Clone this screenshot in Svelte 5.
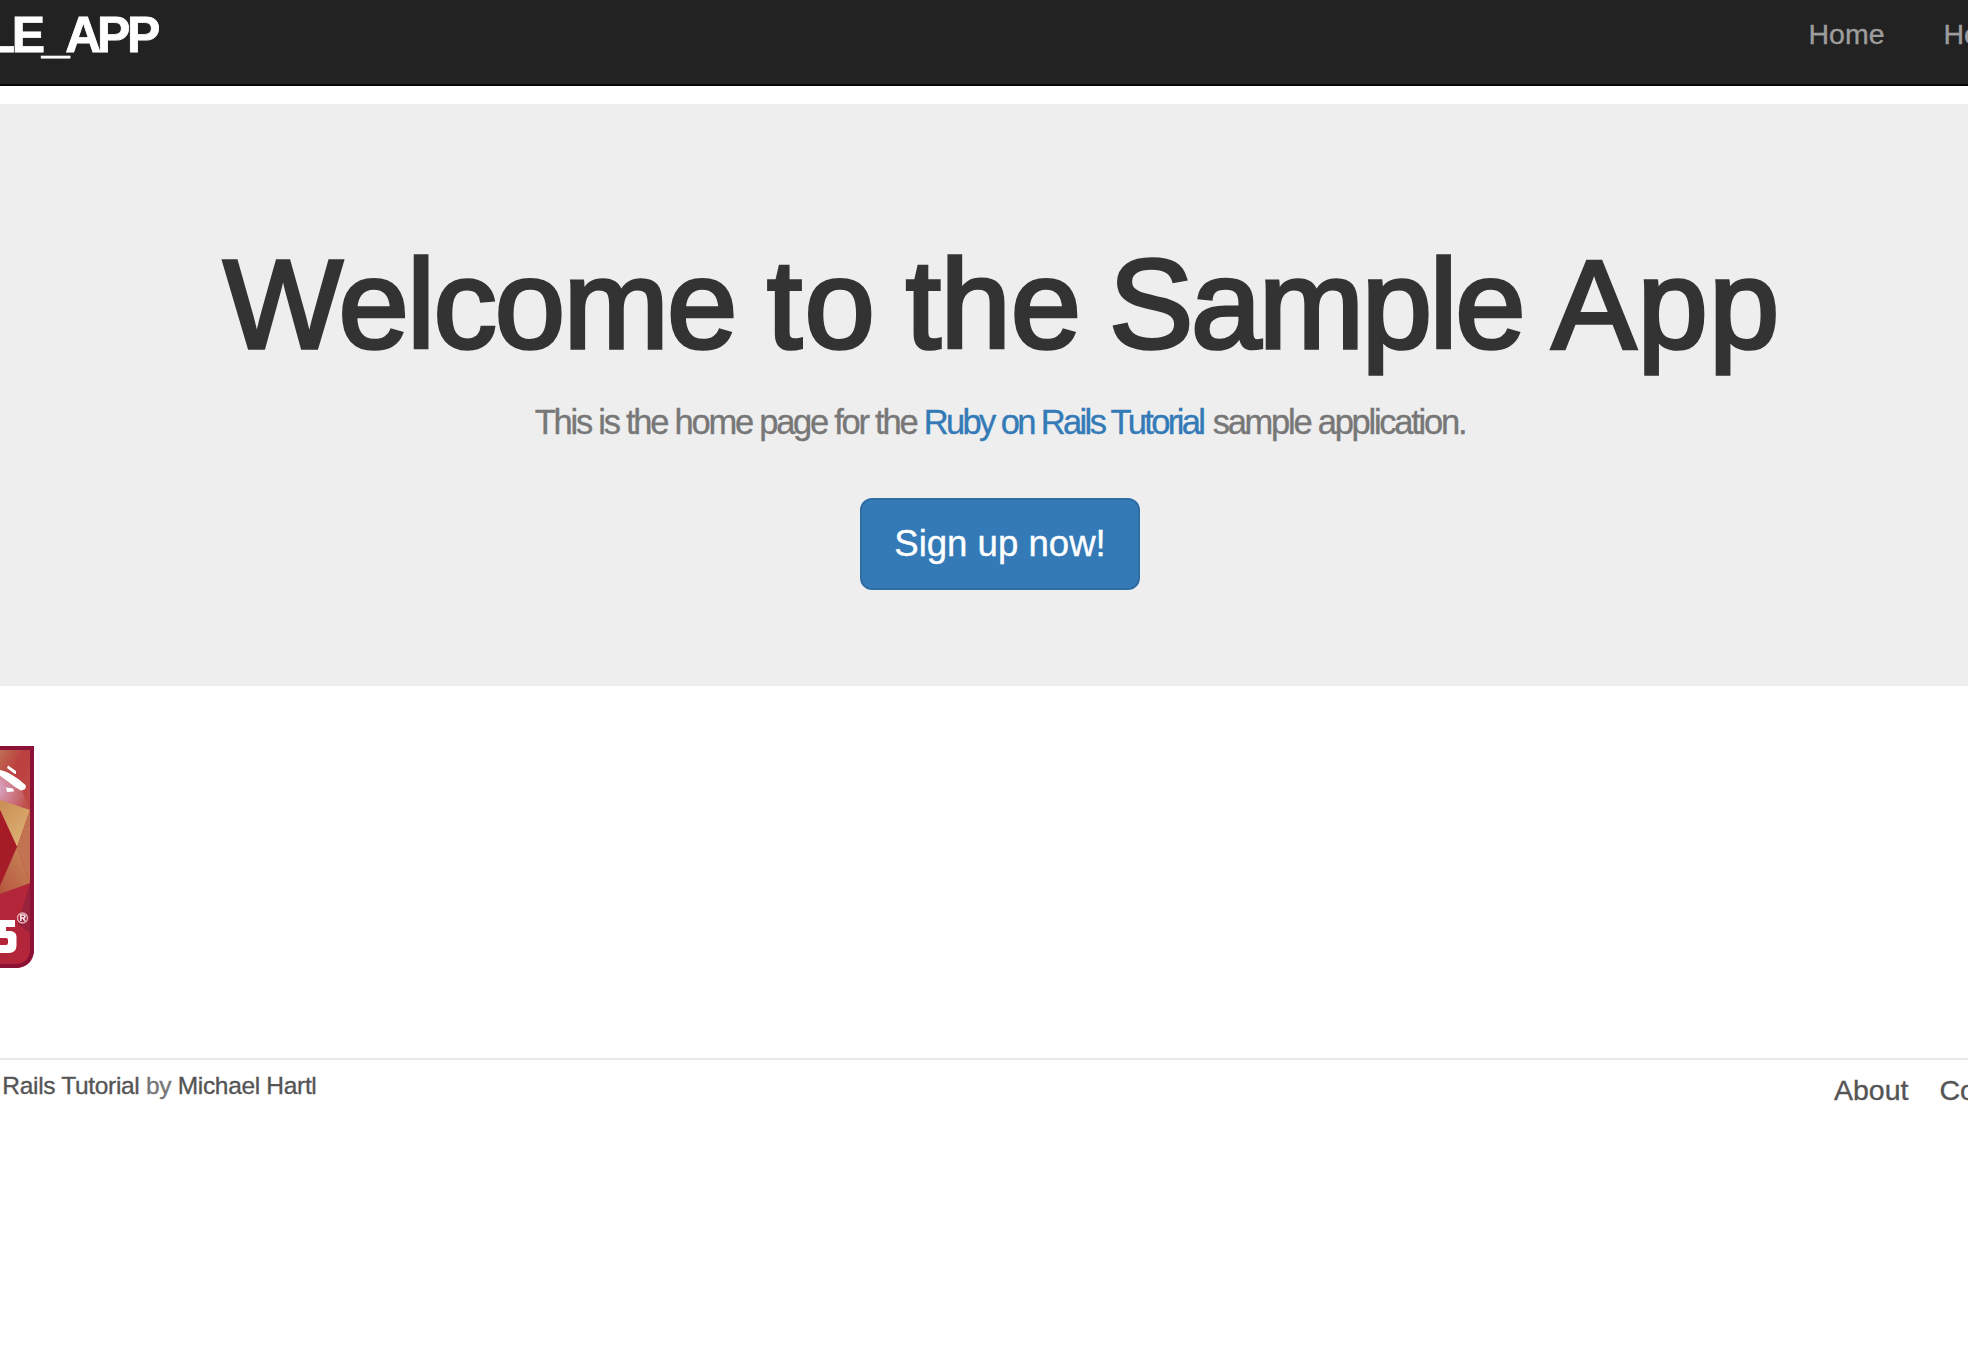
<script>
  const navLinks = ['Home', 'Help'];
  const footerLinks = ['About', 'Contact'];
</script>

<div class="page">
  <header>
    <div class="brand"><span>SAMPLE<b>_A</b>PP</span></div>
    <nav>
      {#each navLinks as label}<a href="#top">{label}</a>{/each}
    </nav>
  </header>

  <main class="jumbotron">
    <h1>
      <span class="welcome">Welcome</span> <span class="to">to</span> <span class="the">the</span> <span class="sample">Sample</span> <span class="app">App</span>
    </h1>
    <p>This is the home page for the <a href="#tutorial">Ruby on Rails Tutorial</a> sample application.</p>
    <a class="button" href="#signup">Sign up now!</a>
  </main>

  <svg class="logo" width="34" height="222" viewBox="0 0 34 222" aria-label="Rails logo">
    <defs>
      <clipPath id="card"><path d="M0 0H34V206Q32 220 18 222H0Z" /></clipPath>
      <filter id="soft" x="-20%" y="-5%" width="140%" height="110%"><feGaussianBlur stdDeviation=".5" /></filter>
      <linearGradient id="sky" x1="0" y1="0" x2="1" y2="1">
        <stop offset="0" stop-color="#c07a58" /><stop offset=".45" stop-color="#bb3f3f" /><stop offset="1" stop-color="#c04c48" />
      </linearGradient>
      <linearGradient id="gold" x1="0" y1="0" x2=".7" y2="1">
        <stop offset="0" stop-color="#c98a52" /><stop offset="1" stop-color="#dcb274" />
      </linearGradient>
      <linearGradient id="amber" x1="1" y1="0" x2="0" y2="1">
        <stop offset="0" stop-color="#c98a58" /><stop offset="1" stop-color="#b5523f" />
      </linearGradient>
      <radialGradient id="pink" cx="0" cy=".4" r="1">
        <stop offset="0" stop-color="#dcaacb" /><stop offset="1" stop-color="#c0504d" />
      </radialGradient>
    </defs>
    <g clip-path="url(#card)">
      <rect width="34" height="222" fill="#b32538" />
      <g filter="url(#soft)">
        <path d="M-4 0H31V66L-4 54Z" fill="url(#sky)" />
        <path d="M-4 28L22 44L29 64L-4 54Z" fill="url(#pink)" />
        <path d="M-4 54H0L30 64L17 101L0 64H-4Z" fill="url(#gold)" />
        <path d="M-4 60L0 64L17 101L0 140H-4Z" fill="#a51b28" />
        <path d="M30 64V137L17 101Z" fill="#c27351" />
        <path d="M17 101L30 137L0 148H-4V140H0Z" fill="url(#amber)" />
        <path d="M30 137L18 178L30 187Z" fill="#98203a" />
        <path d="M-4 23L0 24C7 25 18 32 25.500 39Q27 44 21 44.500C14 41 8 35 0 30H-4Z" fill="#fff" />
        <path d="M8 19.500L16 25V28L14 27.500L7 22Z M6 41.500L13 42.500L14 45.500L7 46Z" fill="#fff" />
        <path d="M-4 174H15V181H6V185H11Q16.500 186 16.500 191V200Q16 207 9 207H-4V199H6Q8 199 8 197V194Q8 192 6 192H-4Z" fill="#fff" />
        <circle cx="22.500" cy="172" r="5" fill="none" stroke="#e6b3bd" stroke-width="1.300" />
        <path d="M20.800 175V169H23Q25 169 25 170.500T23 172H21M23 172L25 175" fill="none" stroke="#f8e0e4" stroke-width="1.600" />
      </g>
      <path d="M0 2H32V206Q30 218 18 220H0" fill="none" stroke="#8b1236" stroke-width="4" />
    </g>
  </svg>

  <footer>
    <small><span>The Ruby on</span>Rails Tutorial <i>by</i> Michael Hartl</small>
    <nav>
      {#each footerLinks as label}<a href="#bottom">{label}</a>{/each}
    </nav>
  </footer>
</div>

<style>
  :global(body) {
    margin: 0;
    background: #fff;
    overflow: hidden;
  }
  .page {
    width: 1968px;
    height: 1358px;
    overflow: hidden;
    font: 28.5px/40px "Liberation Sans", Arial, sans-serif;
    -webkit-text-stroke: 0.35px currentColor;
    color: #333;
  }
  a {
    color: inherit;
    text-decoration: none;
  }
  header {
    display: flex;
    justify-content: space-between;
    box-sizing: border-box;
    height: 86px;
    background: #222;
    border-bottom: 2px solid #080808;
  }
  .brand {
    display: flex;
    justify-content: flex-end;
    width: 157px;
    padding-top: 15px;
    white-space: nowrap;
    font-size: 50px;
    font-weight: 700;
    letter-spacing: -3.3px;
    color: #fff;
    -webkit-text-stroke: 0.8px #fff;
  }
  .brand b {
    letter-spacing: -4.4px;
  }
  header nav {
    display: flex;
    gap: 59px;
    width: 159.5px;
    padding-top: 14px;
    color: #9d9d9d;
  }
  .jumbotron {
    display: flex;
    flex-direction: column;
    align-items: center;
    box-sizing: border-box;
    height: 582px;
    margin-top: 18px;
    padding: 130px 0 0 32px;
    background: #eee;
  }
  h1 {
    margin: 0 0 0 4px;
    font-size: 126.5px;
    line-height: 140px;
    font-weight: 400;
    letter-spacing: -0.8px;
    -webkit-text-stroke: 3.6px #333;
    white-space: nowrap;
  }
  .welcome {
    margin-right: -3px;
    letter-spacing: -1.8px;
  }
  .to {
    margin-right: -6px;
    letter-spacing: 2.5px;
  }
  .the {
    margin-right: -6px;
    letter-spacing: -0.3px;
  }
  .sample {
    margin-right: -5.6px;
    letter-spacing: -2.5px;
  }
  .app {
    letter-spacing: 1.3px;
  }
  p {
    margin: 23px 0 0;
    font-size: 34.5px;
    line-height: 50px;
    letter-spacing: -2.25px;
    color: #777;
    white-space: nowrap;
  }
  p a {
    margin-right: 2px;
    letter-spacing: -2.63px;
    color: #337ab7;
  }
  .button {
    box-sizing: border-box;
    width: 280px;
    height: 92px;
    margin-top: 51px;
    border: 2px solid #2e6da4;
    border-radius: 12px;
    background: #337ab7;
    color: #fff;
    font-size: 36.6px;
    line-height: 88px;
    text-align: center;
  }
  .logo {
    display: block;
    margin-top: 60px;
  }
  footer {
    display: flex;
    justify-content: space-between;
    margin-top: 90px;
    border-top: 2px solid #eaeaea;
    color: #555;
  }
  small {
    display: flex;
    justify-content: flex-end;
    width: 316.5px;
    padding-top: 6px;
    font-size: 24.5px;
    letter-spacing: -0.32px;
    white-space: pre;
  }
  small span {
    margin-right: 7px;
  }
  i {
    font-style: normal;
    color: #777;
  }
  footer nav {
    display: flex;
    gap: 31px;
    width: 134px;
    padding-top: 10px;
  }
</style>
